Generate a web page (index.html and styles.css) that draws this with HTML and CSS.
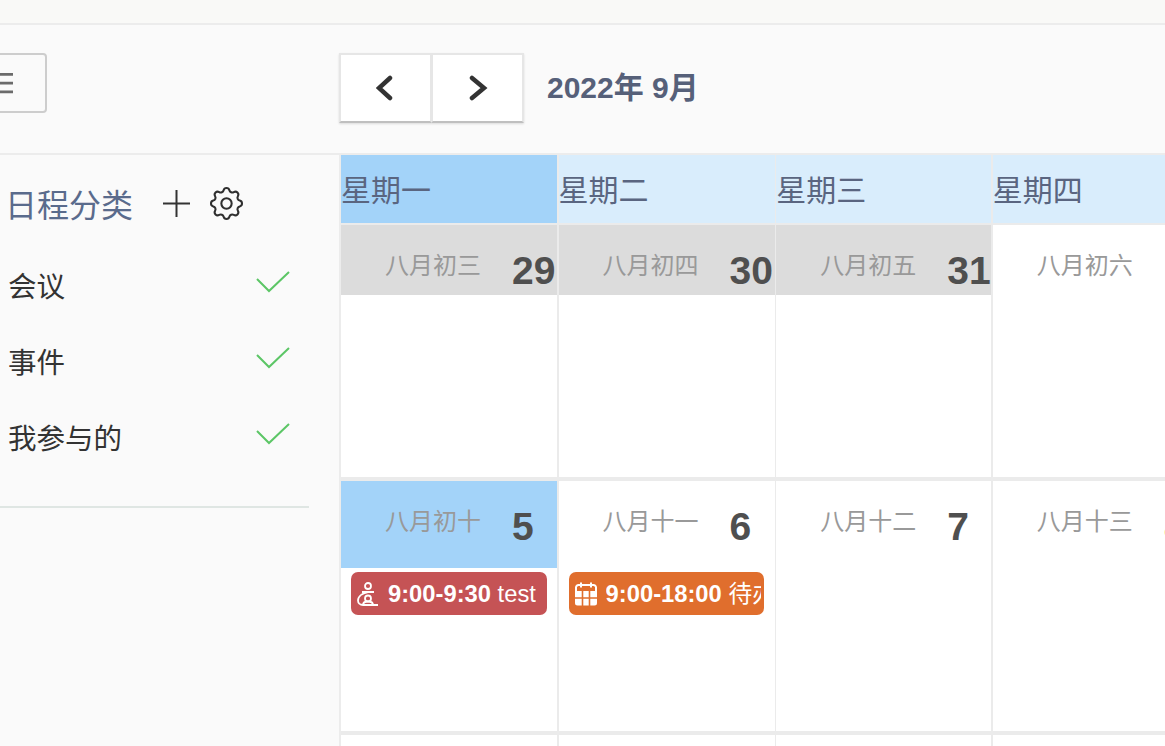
FILE: index.html
```html
<!DOCTYPE html>
<html lang="zh-CN">
<head>
<meta charset="utf-8">
<title>日程</title>
<link rel="stylesheet" href="styles.css">
</head>
<body>
<div class="topbar"></div>
<header class="toolbar">
  <div class="toolbar-left">
    <button class="menu-btn" type="button">
      <svg class="menu-icon" width="26" height="23" viewBox="0 0 26 23"><path d="M0 1.5h26M0 11h26M0 20.5h26"/></svg>
    </button>
  </div>
  <div class="nav">
    <button class="nav-btn" type="button"><svg width="20" height="26" viewBox="0 0 20 26"><path d="M14 3 3 13l11 10"/></svg></button>
    <button class="nav-btn" type="button"><svg width="20" height="26" viewBox="0 0 20 26"><path d="M4 3l12 10L4 23"/></svg></button>
  </div>
  <h1 class="month">2022年 9月</h1>
</header>
<div class="main">
  <aside class="sidebar">
    <div class="side-head">
      <span class="side-title">日程分类</span>
      <svg class="plus" width="27" height="27" viewBox="0 0 27 27"><path d="M13.5 0v27M0 13.5h27"/></svg>
      <svg class="gear" width="31" height="31" viewBox="3 3 18 18"><path d="M10.325 4.317c.426-1.756 2.924-1.756 3.35 0a1.724 1.724 0 0 0 2.573 1.066c1.543-.94 3.31.826 2.37 2.37a1.724 1.724 0 0 0 1.065 2.572c1.756.426 1.756 2.924 0 3.35a1.724 1.724 0 0 0-1.066 2.573c.94 1.543-.826 3.31-2.37 2.37a1.724 1.724 0 0 0-2.572 1.065c-.426 1.756-2.924 1.756-3.35 0a1.724 1.724 0 0 0-2.573-1.066c-1.543.94-3.31-.826-2.37-2.37a1.724 1.724 0 0 0-1.065-2.572c-1.756-.426-1.756-2.924 0-3.35a1.724 1.724 0 0 0 1.066-2.573c-.94-1.543.826-3.31 2.37-2.37 1 .608 2.296.07 2.572-1.065z"/><circle cx="12" cy="12" r="3"/></svg>
    </div>
    <ul class="cat-list">
      <li class="cat"><span>会议</span><svg class="check" width="34" height="22" viewBox="0 0 34 22"><path d="M1 8l12 12L33 1"/></svg></li>
      <li class="cat"><span>事件</span><svg class="check" width="34" height="22" viewBox="0 0 34 22"><path d="M1 8l12 12L33 1"/></svg></li>
      <li class="cat"><span>我参与的</span><svg class="check" width="34" height="22" viewBox="0 0 34 22"><path d="M1 8l12 12L33 1"/></svg></li>
    </ul>
  </aside>
  <section class="calendar">
    <div class="row weekdays">
      <div class="wd wd-active">星期一</div>
      <div class="wd">星期二</div>
      <div class="wd">星期三</div>
      <div class="wd">星期四</div>
    </div>
    <div class="row week week-1">
      <div class="cell"><div class="head head-past"><span class="lunar">八月初三</span><span class="num">29</span></div></div>
      <div class="cell"><div class="head head-past"><span class="lunar">八月初四</span><span class="num">30</span></div></div>
      <div class="cell"><div class="head head-past"><span class="lunar">八月初五</span><span class="num">31</span></div></div>
      <div class="cell"><div class="head"><span class="lunar">八月初六</span><span class="num">1</span></div></div>
    </div>
    <div class="row week week-2">
      <div class="cell">
        <div class="head head-selected"><span class="lunar">八月初十</span><span class="num">5</span></div>
        <div class="event event-red">
          <svg class="ev-icon" width="22" height="24" viewBox="0 0 22 24"><circle cx="11" cy="4" r="3"/><path d="M5 10h12M11 10C6 11 1 14 1 18.500 1 21 3 23 6 23h15"/><circle cx="11" cy="16.500" r="3"/><path d="M6 23c0-3 2-3.500 5-3.500s5 .5 5 3.500"/></svg>
          <span class="ev-text"><b>9:00-9:30</b> test</span>
        </div>
      </div>
      <div class="cell">
        <div class="head"><span class="lunar">八月十一</span><span class="num">6</span></div>
        <div class="event event-orange">
          <svg class="ev-icon cal-icon" width="22" height="24" viewBox="0 0 22 24"><path class="cal-fill" d="M0 9h22v12a2.500 2.500 0 0 1-2.500 2.500h-17A2.500 2.500 0 0 1 0 21z"/><path class="cal-line" d="M1 9V5.500A2.500 2.500 0 0 1 3.500 3h15A2.500 2.500 0 0 1 21 5.500V9M6 .5v5M16 .5v5"/><path class="cal-grid" d="M7.500 9v15M14.500 9v15M0 16h22"/></svg>
          <span class="ev-text"><b>9:00-18:00</b> 待办事项</span>
        </div>
      </div>
      <div class="cell"><div class="head"><span class="lunar">八月十二</span><span class="num">7</span></div></div>
      <div class="cell"><div class="head"><span class="lunar">八月十三</span><span class="num num-today">8</span></div></div>
    </div>
    <div class="row week week-3">
      <div class="cell"></div><div class="cell"></div><div class="cell"></div><div class="cell"></div>
    </div>
  </section>
</div>
</body>
</html>
```

FILE: styles.css
```css
* { box-sizing: border-box; }
html, body { margin: 0; height: 100%; overflow: hidden; }
body {
  width: 1165px;
  height: 746px;
  background: #fafafa;
  font-family: "Liberation Sans", "Noto Sans CJK SC", sans-serif;
}
.topbar {
  height: 25px;
  background: #f9f9f7;
  border-bottom: 2px solid #ececec;
}
.toolbar {
  display: flex;
  align-items: flex-start;
  height: 130px;
  padding-top: 28px;
  border-bottom: 2px solid #ececec;
}
.toolbar-left { width: 339px; flex: none; }
.menu-btn {
  display: flex;
  align-items: center;
  justify-content: flex-end;
  width: 60px;
  height: 60px;
  margin: 0 0 0 -13px;
  padding: 0 32px 0 0;
  background: #fafafa;
  border: 2px solid #cdcdcd;
  border-radius: 4px;
}
.menu-icon path { fill: none; stroke: #6b6b6b; stroke-width: 3; }
.nav { display: flex; flex: none; box-shadow: 0 1px 2px rgba(0, 0, 0, .12); }
.nav-btn {
  display: flex;
  align-items: center;
  justify-content: center;
  width: 93px;
  height: 70px;
  margin: 0;
  padding: 0;
  background: #fff;
  border: 2px solid #e6e6e6;
  border-bottom-color: #bfbfbf;
}
.nav-btn + .nav-btn { margin-left: -1px; }
.nav-btn path { fill: none; stroke: #333; stroke-width: 4.500; stroke-linecap: round; stroke-linejoin: miter; }
.month {
  margin: 0 0 0 23px;
  font-size: 30px;
  line-height: 70px;
  font-weight: 700;
  color: #566079;
}
.main { display: flex; height: 591px; }
.sidebar {
  width: 341px;
  flex: none;
  height: 100%;
  border-right: 2px solid #ececec;
}
.side-head {
  display: flex;
  align-items: center;
  height: 92px;
  padding: 4px 0 0 5px;
}
.side-title { font-size: 32px; color: #5a6b8c; }
.plus { margin-left: 30px; }
.plus path { fill: none; stroke: #333; stroke-width: 2; }
.gear { margin-left: 21px; overflow: visible; }
.gear path, .gear circle { fill: none; stroke: #2f2f2f; stroke-width: 1.200; }
.cat-list {
  list-style: none;
  width: 309px;
  height: 261px;
  margin: 0;
  padding: 0 0 0 8px;
  border-bottom: 2px solid #dfe6e3;
}
.cat {
  display: flex;
  align-items: center;
  justify-content: space-between;
  height: 76px;
  padding: 0 19px 2px 0;
  font-size: 28.500px;
  color: #333;
}
.check { margin-bottom: 4px; }
.check path { fill: none; stroke: #5cc666; stroke-width: 2; }
.calendar { flex: none; width: 824px; height: 100%; overflow: hidden; background: #ebebeb; }
.row { display: grid; grid-template-columns: 216px 216px 215px 216px; column-gap: 1.6px; }
.weekdays { height: 68px; margin-bottom: 2px; }
.wd {
  height: 68px;
  background: #d9edfc;
  font-size: 30px;
  line-height: 72px;
  color: #5a6580;
}
.wd-active { background: #a3d3f9; }
.week { margin-bottom: 4px; height: 250px; }
.week-1 { height: 252px; }
.week-3 { height: 11px; margin-bottom: 0; }
.cell { background: #fff; overflow: hidden; }
.head { display: flex; align-items: flex-start; padding: 26px 0 0 44px; }
.head-past { height: 70px; background: #dcdcdc; }
.head-selected { background: #a3d3f9; }
.week-2 .head { height: 87px; }
.lunar { width: 127px; flex: none; font-size: 24px; line-height: 30px; color: #999; }
.num { font-size: 39px; line-height: 40px; font-weight: 700; color: #4f4f4f; }
.num-today { color: #f5a623; }
.event {
  display: flex;
  align-items: center;
  width: 196px;
  height: 43px;
  margin: 4px 0 0 10px;
  padding: 0 3px 0 6px;
  border-radius: 7px;
  color: #fff;
  font-size: 23.750px;
  overflow: hidden;
}
.event-red { background: #c55355; }
.event-orange { width: 195px; background: #e06e2d; }
.ev-icon { flex: none; margin-right: 9px; }
.event-red .ev-icon circle, .event-red .ev-icon path { fill: none; stroke: #fff; stroke-width: 1.800; }
.cal-fill { fill: #fff; }
.cal-line { fill: none; stroke: #fff; stroke-width: 2; }
.cal-grid { fill: none; stroke: #e06e2d; stroke-width: 1.600; }
.ev-text { height: 34px; line-height: 34px; white-space: nowrap; overflow: hidden; }
```
